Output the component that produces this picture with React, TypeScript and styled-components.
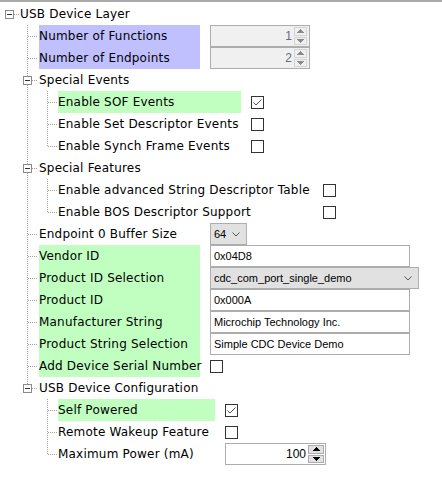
import React from 'react';
import styled, { createGlobalStyle } from 'styled-components';

const Global = createGlobalStyle`
  html, body { margin: 0; padding: 0; background: #fff; }
  body { font-family: "DejaVu Sans", Verdana, sans-serif; font-size: 12px; color: #000; }
`;

const Panel = styled.div`
  width: 442px;
  height: 484px;
  box-sizing: border-box;
  border-top: 2px solid #a9a9a9;
  padding-top: 1px;
  display: flex;
  flex-direction: column;
  overflow: hidden;
`;

const Row = styled.div`
  display: flex;
  align-items: center;
  height: 22px;
  flex: none;
`;

const Label = styled.div<{ $w?: number; $bg?: string }>`
  width: ${(p) => (p.$w ? `${p.$w}px` : 'auto')};
  height: 22px;
  line-height: 22px;
  flex: none;
  white-space: nowrap;
  background: ${(p) => p.$bg || 'transparent'};
  font-family: "DejaVu Sans", Verdana, sans-serif;
  font-size: 12px;
  letter-spacing: 0.2px;
`;

const ControlSlot = styled.div`
  margin-left: 10px;
  display: flex;
  align-items: center;
  height: 22px;
`;

const Box = styled.div`
  width: 13px;
  height: 13px;
  box-sizing: border-box;
  border: 1px solid #333;
  background: #fff;
  display: flex;
  align-items: center;
  justify-content: center;
`;

const FieldBase = styled.div<{ $w: number }>`
  width: ${(p) => p.$w}px;
  height: 22px;
  box-sizing: border-box;
  border: 1px solid #adadad;
  display: flex;
  align-items: center;
  font-family: "Liberation Sans", Arial, sans-serif;
  font-size: 11px;
  color: #000;
  padding-left: 3px;
  white-space: nowrap;
`;

const TextField = styled(FieldBase)`
  background: #fff;
`;

const Combo = styled(FieldBase)`
  background: #e1e1e1;
  justify-content: space-between;
  padding-right: 6px;
`;

const SpinBox = styled.div<{ $w: number; $disabled?: boolean }>`
  width: ${(p) => p.$w}px;
  height: 22px;
  box-sizing: border-box;
  border: 1px solid #adadad;
  background: ${(p) => (p.$disabled ? '#f0f0f0' : '#fff')};
  display: flex;
  align-items: stretch;
  padding: 1px ${(p) => (p.$disabled ? 2 : 1)}px 1px 1px;
`;

const SpinValue = styled.div<{ $disabled?: boolean }>`
  flex: 1;
  display: flex;
  align-items: center;
  justify-content: flex-end;
  padding-right: 2px;
  font-family: "Liberation Sans", Arial, sans-serif;
  font-size: 12px;
  color: ${(p) => (p.$disabled ? '#6b6b7b' : '#000')};
`;

const SpinButtons = styled.div<{ $w: number }>`
  width: ${(p) => p.$w}px;
  display: flex;
  flex-direction: column;
  gap: 1px;
`;

const SpinButton = styled.div<{ $disabled?: boolean }>`
  flex: 1;
  box-sizing: border-box;
  display: flex;
  align-items: center;
  justify-content: center;
  background: ${(p) => (p.$disabled ? '#f0f0f0' : '#e1e1e1')};
  border: 1px solid ${(p) => (p.$disabled ? '#d4d4d4' : '#adadad')};
`;

const DOT = '#a0a0a0';

type Guide = { level: number; last?: boolean; expander?: boolean; rootCont?: boolean };

const Connector: React.FC<Guide> = ({ level, last, expander, rootCont = true }) => {
  const widths = [19, 38, 57];
  const w = widths[level];
  const V = (x: number, y1: number, y2: number, k: string) => (
    <line key={k} x1={x + 0.5} y1={y1} x2={x + 0.5} y2={y2} stroke={DOT} strokeDasharray="1 1" />
  );
  const H = (x1: number, x2: number, k: string) => (
    <line key={k} x1={x1} y1={11.5} x2={x2 + 1} y2={11.5} stroke={DOT} strokeDasharray="1 1" />
  );
  const Exp = (cx: number) => (
    <g key="exp">
      <rect x={cx - 4 + 0.5} y={7.5} width={8} height={8} fill="#fff" stroke="#8a8a8a" />
      <line x1={cx - 2} y1={11.5} x2={cx + 3} y2={11.5} stroke="#333" />
    </g>
  );
  const parts: React.ReactNode[] = [];
  if (level === 0) {
    parts.push(H(14, 18, 'h'));
    parts.push(Exp(9));
  } else if (level === 1) {
    parts.push(V(27, 0, last ? 11 : 22, 'v'));
    parts.push(H(expander ? 32 : 28, 37, 'h'));
    if (expander) parts.push(Exp(27));
  } else {
    if (rootCont) parts.push(V(27, 0, 22, 'r'));
    parts.push(V(47, 0, last ? 11 : 22, 'v'));
    parts.push(H(48, 56, 'h'));
  }
  return (
    <svg width={w + 1} height={22} style={{ flex: 'none', display: 'block' }} shapeRendering="crispEdges">
      {parts}
    </svg>
  );
};

const Check: React.FC<{ checked?: boolean }> = ({ checked }) => (
  <Box>
    {checked && (
      <svg width="11" height="11" viewBox="0 0 11 11">
        <polyline points="1.5,5.5 4,8 9.5,2.5" fill="none" stroke="#555" strokeWidth="1" />
      </svg>
    )}
  </Box>
);

const Chevron = () => (
  <svg width="8" height="5" viewBox="0 0 8 5">
    <polyline points="0.5,0.5 4,4 7.5,0.5" fill="none" stroke="#555" strokeWidth="1" />
  </svg>
);

const Tri: React.FC<{ up?: boolean; color: string }> = ({ up, color }) => (
  <svg width="7" height="4" viewBox="0 0 7 4" shapeRendering="crispEdges">
    {up ? <polygon points="3.5,0 7,4 0,4" fill={color} /> : <polygon points="0,0 7,0 3.5,4" fill={color} />}
  </svg>
);

const Spinner: React.FC<{ value: string; w: number; bw: number; disabled?: boolean }> = ({ value, w, bw, disabled }) => (
  <SpinBox $w={w} $disabled={disabled}>
    <SpinValue $disabled={disabled}>{value}</SpinValue>
    <SpinButtons $w={bw}>
      <SpinButton $disabled={disabled}>
        <Tri up color={disabled ? '#8a8a8a' : '#000'} />
      </SpinButton>
      <SpinButton $disabled={disabled}>
        <Tri color={disabled ? '#8a8a8a' : '#000'} />
      </SpinButton>
    </SpinButtons>
  </SpinBox>
);

const PURPLE = '#c0c0ff';
const GREEN = '#c0ffc0';

type Item = Guide & {
  label: string;
  w?: number;
  bg?: string;
  control?: React.ReactNode;
};

const items: Item[] = [
  { level: 0, expander: true, label: 'USB Device Layer' },
  { level: 1, label: 'Number of Functions', w: 161, bg: PURPLE, control: <Spinner value="1" w={100} bw={13} disabled /> },
  { level: 1, label: 'Number of Endpoints', w: 161, bg: PURPLE, control: <Spinner value="2" w={100} bw={13} disabled /> },
  { level: 1, expander: true, label: 'Special Events' },
  { level: 2, label: 'Enable SOF Events', w: 183, bg: GREEN, control: <Check checked /> },
  { level: 2, label: 'Enable Set Descriptor Events', w: 183, control: <Check /> },
  { level: 2, last: true, label: 'Enable Synch Frame Events', w: 183, control: <Check /> },
  { level: 1, expander: true, label: 'Special Features' },
  { level: 2, label: 'Enable advanced String Descriptor Table', w: 255, control: <Check /> },
  { level: 2, last: true, label: 'Enable BOS Descriptor Support', w: 255, control: <Check /> },
  {
    level: 1,
    label: 'Endpoint 0 Buffer Size',
    w: 161,
    control: (
      <Combo $w={37}>
        <span>64</span>
        <Chevron />
      </Combo>
    ),
  },
  { level: 1, label: 'Vendor ID', w: 161, bg: GREEN, control: <TextField $w={200}>0x04D8</TextField> },
  {
    level: 1,
    label: 'Product ID Selection',
    w: 161,
    bg: GREEN,
    control: (
      <Combo $w={209}>
        <span>cdc_com_port_single_demo</span>
        <Chevron />
      </Combo>
    ),
  },
  { level: 1, label: 'Product ID', w: 161, bg: GREEN, control: <TextField $w={200}>0x000A</TextField> },
  { level: 1, label: 'Manufacturer String', w: 161, bg: GREEN, control: <TextField $w={200}>Microchip Technology Inc.</TextField> },
  { level: 1, label: 'Product String Selection', w: 161, bg: GREEN, control: <TextField $w={200}>Simple CDC Device Demo</TextField> },
  { level: 1, label: 'Add Device Serial Number', w: 161, bg: GREEN, control: <Check /> },
  { level: 1, last: true, expander: true, label: 'USB Device Configuration' },
  { level: 2, rootCont: false, label: 'Self Powered', w: 157, bg: GREEN, control: <Check checked /> },
  { level: 2, rootCont: false, label: 'Remote Wakeup Feature', w: 157, control: <Check /> },
  {
    level: 2,
    rootCont: false,
    last: true,
    label: 'Maximum Power (mA)',
    w: 157,
    control: <Spinner value="100" w={101} bw={16} />,
  },
];

export default function App() {
  return (
    <>
      <Global />
      <Panel>
        {items.map((it, i) => (
          <Row key={i}>
            <Connector level={it.level} last={it.last} expander={it.expander} rootCont={it.rootCont} />
            <Label $w={it.w} $bg={it.bg}>
              {it.label}
            </Label>
            {it.control && <ControlSlot>{it.control}</ControlSlot>}
          </Row>
        ))}
      </Panel>
    </>
  );
}
